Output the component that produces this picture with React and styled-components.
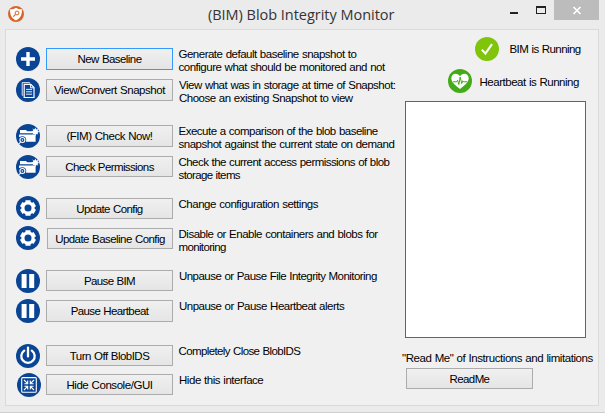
import React from "react";
import styled, { createGlobalStyle } from "styled-components";

const GlobalStyle = createGlobalStyle`
  * { box-sizing: border-box; }
  body { margin: 0; background: #ebebeb; }
`;

const Window = styled.div`
  width: 605px;
  height: 413px;
  display: flex;
  flex-direction: column;
  background: #ebebeb;
  border-bottom: 1px solid #cfcfcf;
  font: 11.5px/13px "Liberation Sans", Arial, sans-serif;
  word-spacing: 0.5px;
  color: #000;
  overflow: hidden;
`;

const TitleBar = styled.header`
  flex: none;
  height: 29px;
  display: flex;
  align-items: flex-start;
  padding: 0 6px 0 8px;
`;

const AppIcon = styled.svg`
  flex: none;
  width: 16px;
  height: 16px;
  margin-top: 6px;
`;

const Title = styled.h1`
  flex: 1;
  margin: 4px 0 0 184px;
  font: 400 14.5px/21px "Open Sans", sans-serif;
  letter-spacing: -0.03px;
  word-spacing: 0;
  color: #333;
  white-space: nowrap;
`;

const Controls = styled.div`
  display: flex;
  height: 20px;
`;

const Control = styled.button`
  width: ${(p) => p.$w}px;
  height: 20px;
  padding: 0;
  border: 0;
  background: ${(p) => (p.$close ? "#bcbcbc" : "transparent")};
  svg { display: block; }
`;

const Panel = styled.main`
  flex: none;
  display: flex;
  width: 594px;
  height: 377px;
  margin-left: 5px;
  border: 1px solid #dadada;
  background: #f0f0f0;
`;

const Actions = styled.section`
  flex: none;
  width: 396px;
  padding: 17px 0 0 10px;
`;

const ActionRow = styled.div`
  display: flex;
  align-items: flex-start;
  height: 24px;
  margin-top: ${(p) => p.$gap}px;
`;

const Badge = styled.svg`
  flex: none;
  width: 24px;
  height: 24px;
  margin-left: ${(p) => p.$indent || 0}px;
`;

const PushButton = styled.button`
  flex: none;
  width: ${(p) => p.$w || 127}px;
  height: ${(p) => p.$h || 22}px;
  margin: ${(p) => p.$top || 0}px 0 0 ${(p) => p.$left || 0}px;
  padding: 1px 0 0;
  border: 1px solid ${(p) => (p.$focused ? "#3399ff" : "#acacac")};
  background: linear-gradient(#f0f0f0, #e5e5e5);
  color: #000;
  font: inherit;
  letter-spacing: ${(p) => p.$ls}px;
  word-spacing: inherit;
  text-align: center;
  white-space: nowrap;
`;

const Description = styled.div`
  margin: ${(p) => p.$top}px 0 0 ${(p) => p.$left}px;
`;

const Line = styled.div`
  letter-spacing: ${(p) => p.$ls}px;
  white-space: nowrap;
`;

const Side = styled.aside`
  flex: none;
  width: 196px;
  padding-top: 7px;
`;

const Status = styled.div`
  display: flex;
  align-items: flex-start;
  height: 24px;
  margin: ${(p) => p.$gap}px 0 0 ${(p) => p.$left}px;
`;

const StatusText = styled(Line)`
  margin: ${(p) => p.$top}px 0 0 ${(p) => p.$left}px;
`;

const LogBox = styled.div`
  width: 181px;
  height: 237px;
  margin: 8px 0 14px 3px;
  border: 1px solid #646464;
  background: #fff;
`;

const NAVY = "#0a4595";

const glyphs = {
  plus: <path d="M12 5v14M5 12h14" stroke="#fff" strokeWidth="3.4" />,
  copy: (
    <g fill="none" stroke="#fff">
      <path d="M13.5 5.4V4.6H6.2v12.6h1" strokeWidth="1" opacity=".85" />
      <path d="M8.2 6.4h6.6l3.2 3.2v9.9H8.2z" strokeWidth="1.2" />
      <path d="M14.6 6.4v3.4H18" strokeWidth="1" />
      <path d="M10 11.4h6M10 13.8h6M10 16.2h6" strokeWidth=".9" />
    </g>
  ),
  folder: (
    <g>
      <path d="M4 6h6l1.2 1.3h6v1.9H4z" fill="#fff" />
      <path d="M3.1 10.5H19.6v7.2H10L7 13H3.1z" fill="#fff" />
      <circle cx="19.4" cy="7.7" r="2.6" fill="#fff" />
      <path
        d="M19.4 3.9v7.6M15.6 7.7h7.6M16.7 5l5.4 5.4M22.100 5l-5.400 5.400"
        stroke="#fff"
        strokeWidth=".9"
      />
      <circle cx="6.4" cy="16" r="3.8" fill={NAVY} />
      <circle cx="6.4" cy="16" r="2.5" fill="none" stroke="#fff" strokeWidth="1.1" />
      <circle cx="6.4" cy="16" r=".8" fill="#fff" />
      <path d="M4.6 18l-1.8 2" stroke="#fff" strokeWidth="1.1" />
    </g>
  ),
  gear: (
    <g>
      <circle cx="12" cy="12" r="6.7" fill="#fff" />
      <path
        d="M12 4.2v15.6M5.2 8.1l13.6 7.8M5.2 15.9l13.6-7.800"
        stroke="#fff"
        strokeWidth="5"
      />
      <circle cx="12" cy="12" r="3.5" fill={NAVY} />
    </g>
  ),
  pause: <path d="M5.6 5h5v14h-5zM13.2 5h5v14h-5z" fill="#fff" />,
  power: (
    <path
      d="M8.2 6.6a6.7 6.7 0 1 0 7.6 0M12 3.6v8.8"
      fill="none"
      stroke="#fff"
      strokeWidth="2.3"
      strokeLinecap="round"
    />
  ),
  shrink: (
    <g fill="none" stroke="#fff">
      <rect x="4.7" y="4.6" width="14.6" height="14.6" rx="1" strokeWidth="1.1" />
      <path
        d="M7 7l3.4 3.4M10.7 7.4v3.3H7.4M17 7l-3.4 3.4M13.3 7.4v3.3h3.3M7 17l3.4-3.4M10.7 16.6v-3.3H7.4M17 17l-3.4-3.4M13.3 16.6v-3.3h3.3"
        strokeWidth="1.1"
      />
    </g>
  ),
  check: <path d="M6.8 12.6l3.6 3.9L17 7.2" fill="none" stroke="#fff" strokeWidth="2.1" />,
  heart: (
    <g>
      <path
        d="M12 20C8 16.8 3.3 13.6 3.3 9.3 3.3 6.6 5.2 4.7 7.6 4.7c1.9 0 3.5 1 4.4 2.6.9-1.6 2.5-2.6 4.4-2.6 2.4 0 4.3 1.9 4.3 4.6C20.7 13.6 16 16.8 12 20z"
        fill="#fff"
      />
      <path
        d="M5 12.8h3.6l1-1.6 1.2 4.4L12.2 8l1.5 6.6 1-2.8.8 1h3.8"
        fill="none"
        stroke="#43ab17"
        strokeWidth="1"
      />
    </g>
  ),
};

function Icon({ name, color = NAVY, indent }) {
  return (
    <Badge viewBox="0 0 24 24" $indent={indent}>
      <circle cx="12" cy="12" r="12" fill={color} />
      {glyphs[name]}
    </Badge>
  );
}

const actions = [
  { icon: "plus", gap: 0, label: "New Baseline", ls: -0.56, top: 1, focused: true, dTop: 1, dLeft: 5.5,
    lines: [["Generate default baseline snapshot to", -0.5], ["configure what should be monitored and not", -0.49]] },
  { icon: "copy", gap: 7, label: "View/Convert Snapshot", ls: -0.46, top: 1, dTop: 1, dLeft: 6,
    lines: [["View what was in storage at time of Snapshot:", -0.5], ["Choose an existing Snapshot to view", -0.5]] },
  { icon: "folder", gap: 22, label: "(FIM) Check Now!", ls: -0.47, top: 1, dTop: 1, dLeft: 5.5,
    lines: [["Execute a comparison of the blob baseline", -0.5], ["snapshot against the current state on demand", -0.48]] },
  { icon: "folder", gap: 7, label: "Check Permissions", ls: -0.61, top: 1, h: 21, dTop: 1, dLeft: 5.5,
    lines: [["Check the current access permissions of blob", -0.55], ["storage items", -0.62]] },
  { icon: "gear", gap: 17, label: "Update Config", ls: -0.59, top: 2, h: 21, dTop: 2, dLeft: 5.5,
    lines: [["Change configuration settings", -0.47]] },
  { icon: "gear", gap: 6, label: "Update Baseline Config", ls: -0.55, top: 2, h: 21, w: 126, left: 7, dTop: 2, dLeft: 5.5,
    lines: [["Disable or Enable containers and blobs for", -0.49], ["monitoring", -0.64]] },
  { icon: "pause", gap: 19, label: "Pause BIM", ls: -0.64, top: 1, h: 21, dTop: 1, dLeft: 6,
    lines: [["Unpause or Pause File Integrity Monitoring", -0.54]] },
  { icon: "pause", gap: 6, label: "Pause Heartbeat", ls: -0.61, top: 1, dTop: 1, dLeft: 6,
    lines: [["Unpause or Pause Heartbeat alerts", -0.52]] },
  { icon: "power", gap: 21, label: "Turn Off BlobIDS", ls: -0.52, top: 1, h: 21, dTop: 1, dLeft: 5.5,
    lines: [["Completely Close BlobIDS", -0.61]] },
  { icon: "shrink", gap: 5, indent: 1, label: "Hide Console/GUI", ls: -0.44, top: 1, h: 21, left: 5, dTop: 1, dLeft: 6,
    lines: [["Hide this interface", -0.46]] },
];

export default function App() {
  return (
    <>
      <GlobalStyle />
      <Window>
        <TitleBar>
          <AppIcon viewBox="0 0 16 16">
            <circle cx="8" cy="8" r="8" fill="#d9642a" />
            <path
              d="M8 1.7c1.7 1 3.5 1.5 5.9 1.5.3 5-1.2 9-5.9 11.3-4.7-2.3-6.2-6.3-5.9-11.3 2.4 0 4.2-.5 5.9-1.5z"
              fill="#fff"
            />
            <circle cx="9" cy="7" r="1.9" fill="none" stroke="#d9642a" strokeWidth="1" />
            <path d="M7.6 8.4L5.3 10.7" stroke="#d9642a" strokeWidth="1.2" />
          </AppIcon>
          <Title>(BIM) Blob Integrity Monitor</Title>
          <Controls>
            <Control $w={26} aria-label="Minimize">
              <svg width="26" height="20"><path d="M2 12h8v2H2z" fill="#222" /></svg>
            </Control>
            <Control $w={20} aria-label="Maximize">
              <svg width="20" height="20"><path d="M2 6h10v8H2zM3 8v5h8V8z" fillRule="evenodd" fill="#222" /></svg>
            </Control>
            <Control $w={45} $close aria-label="Close">
              <svg width="45" height="20"><path d="M19.5 7l7 7M26.5 7l-7 7" stroke="#fff" strokeWidth="1.7" /></svg>
            </Control>
          </Controls>
        </TitleBar>
        <Panel>
          <Actions>
            {actions.map((a) => (
              <ActionRow key={a.label} $gap={a.gap}>
                <Icon name={a.icon} indent={a.indent} />
                <PushButton $w={a.w} $h={a.h} $top={a.top} $left={a.left || 6} $ls={a.ls} $focused={a.focused}>
                  {a.label}
                </PushButton>
                <Description $top={a.dTop} $left={a.dLeft}>
                  {a.lines.map(([text, ls]) => (
                    <Line key={text} $ls={ls}>{text}</Line>
                  ))}
                </Description>
              </ActionRow>
            ))}
          </Actions>
          <Side>
            <Status $gap={0} $left={73}>
              <Icon name="check" color="#80c40c" />
              <StatusText $ls={-0.56} $top={6} $left={10.5}>BIM is Running</StatusText>
            </Status>
            <Status $gap={8} $left={46}>
              <Icon name="heart" color="#43ab17" />
              <StatusText $ls={-0.48} $top={7} $left={7.5}>Heartbeat is Running</StatusText>
            </Status>
            <LogBox />
            <Line $ls={-0.44}>"Read Me" of Instructions and limitations</Line>
            <PushButton $ls={-0.61} $h={21} $top={3} $left={4}>ReadMe</PushButton>
          </Side>
        </Panel>
      </Window>
    </>
  );
}
